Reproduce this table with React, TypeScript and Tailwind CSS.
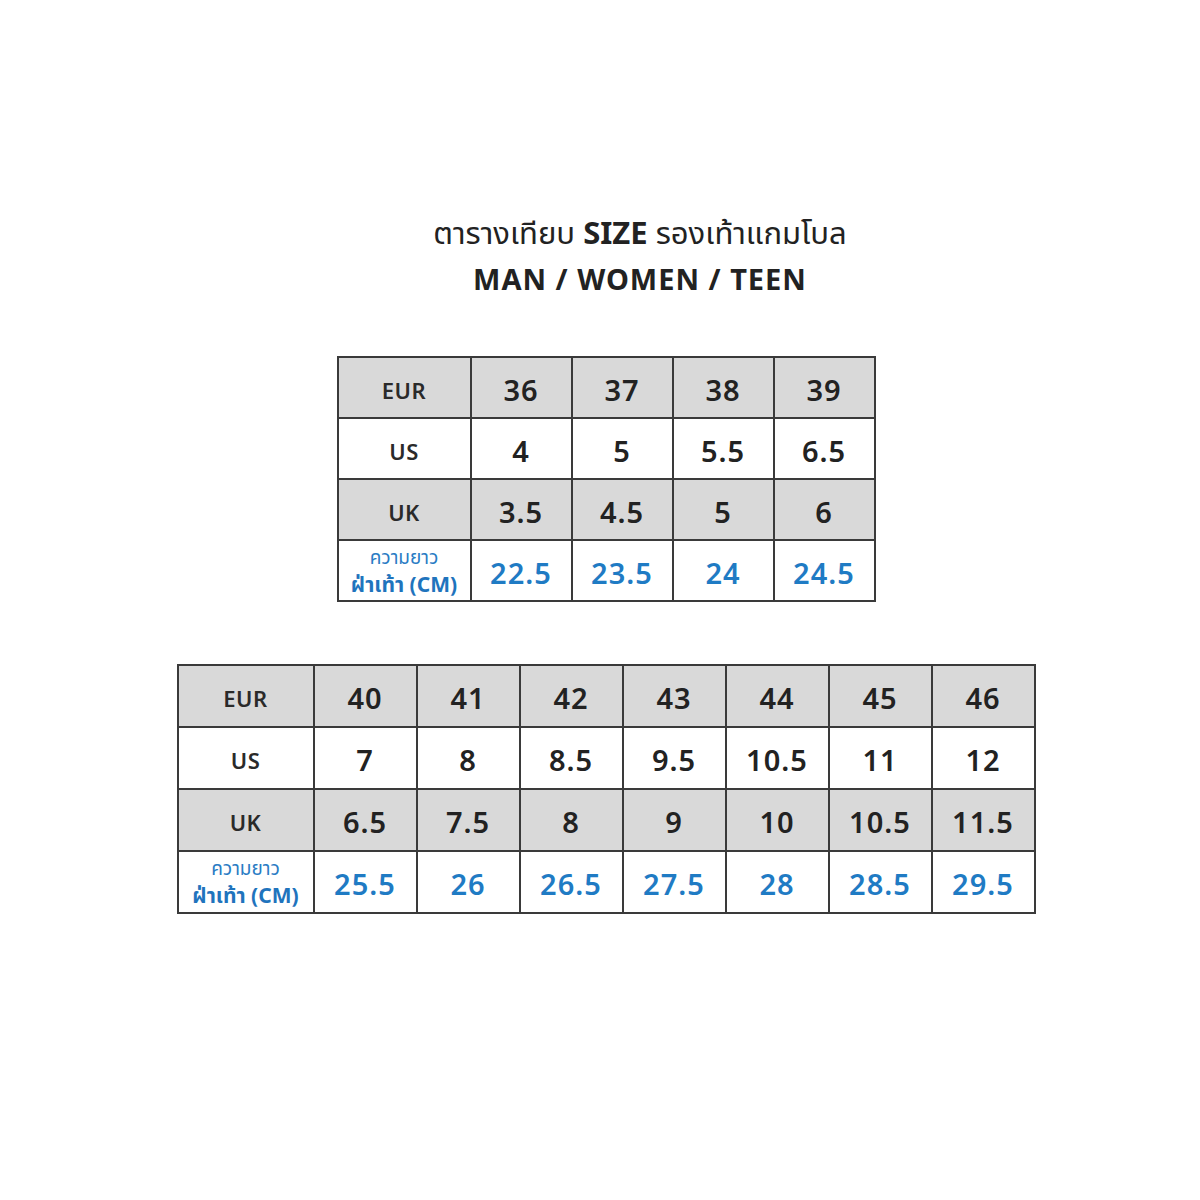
import React from 'react';

type SizeTable = {
  eur: string[];
  us: string[];
  uk: string[];
  cm: string[];
  labelW: number;
  cellW: number;
  rowH: number;
};

const small: SizeTable = {
  eur: ['36', '37', '38', '39'],
  us: ['4', '5', '5.5', '6.5'],
  uk: ['3.5', '4.5', '5', '6'],
  cm: ['22.5', '23.5', '24', '24.5'],
  labelW: 133,
  cellW: 101,
  rowH: 61,
};

const large: SizeTable = {
  eur: ['40', '41', '42', '43', '44', '45', '46'],
  us: ['7', '8', '8.5', '9.5', '10.5', '11', '12'],
  uk: ['6.5', '7.5', '8', '9', '10', '10.5', '11.5'],
  cm: ['25.5', '26', '26.5', '27.5', '28', '28.5', '29.5'],
  labelW: 136,
  cellW: 103,
  rowH: 62,
};

const font = { fontFamily: '"Noto Sans", "Noto Sans Thai", "DejaVu Sans", sans-serif' };

function Table({ t }: { t: SizeTable }) {
  const rows = [
    { label: 'EUR', values: t.eur, gray: true },
    { label: 'US', values: t.us, gray: false },
    { label: 'UK', values: t.uk, gray: true },
  ];

  return (
    <table className="border-collapse border-2 border-[#3a3a3a]" style={font}>
      <tbody>
        {rows.map((r) => (
          <tr key={r.label} className={r.gray ? 'bg-[#d9d9d9]' : 'bg-white'} style={{ height: t.rowH }}>
            <td
              className="border-2 border-[#3a3a3a] text-center text-[22px] font-semibold tracking-[0.5px] text-[#2a2a2a] p-0 pt-[5px]"
              style={{ width: t.labelW }}
            >
              {r.label}
            </td>
            {r.values.map((v, i) => (
              <td
                key={i}
                className="border-2 border-[#3a3a3a] text-center text-[29px] font-semibold tracking-[1px] text-[#222] p-0 pt-[4px]"
                style={{ width: t.cellW }}
              >
                {v}
              </td>
            ))}
          </tr>
        ))}
        <tr className="bg-white" style={{ height: t.rowH }}>
          <td className="border-2 border-[#3a3a3a] text-center p-0 leading-none">
            <div className="text-[19px] leading-[22px] text-[#2a7cc4]">ความยาว</div>
            <div className="mt-[4px] text-[21px] leading-[24px] font-bold text-[#1f74bd]">ฝ่าเท้า (CM)</div>
          </td>
          {t.cm.map((v, i) => (
            <td
              key={i}
              className="border-2 border-[#3a3a3a] text-center text-[29px] font-semibold tracking-[1px] text-[#1f7bc4] p-0 pt-[4px]"
            >
              {v}
            </td>
          ))}
        </tr>
      </tbody>
    </table>
  );
}

export default function App() {
  return (
    <div className="w-[1200px] h-[1200px] bg-white flex flex-col items-center" style={font}>
      <div className="pt-[210px] pl-[80px] flex flex-col items-center text-[#222]">
        <div className="text-[31px] leading-[44px]">
          ตารางเทียบ <span className="font-bold">SIZE</span> รองเท้าแกมโบล
        </div>
        <div className="text-[29px] leading-[40px] font-bold mt-[5px] tracking-[1px]">MAN / WOMEN / TEEN</div>
      </div>

      <div className="pl-[12px] mt-[57px]">
        <Table t={small} />
      </div>
      <div className="pl-[12px] mt-[62px]">
        <Table t={large} />
      </div>
    </div>
  );
}
